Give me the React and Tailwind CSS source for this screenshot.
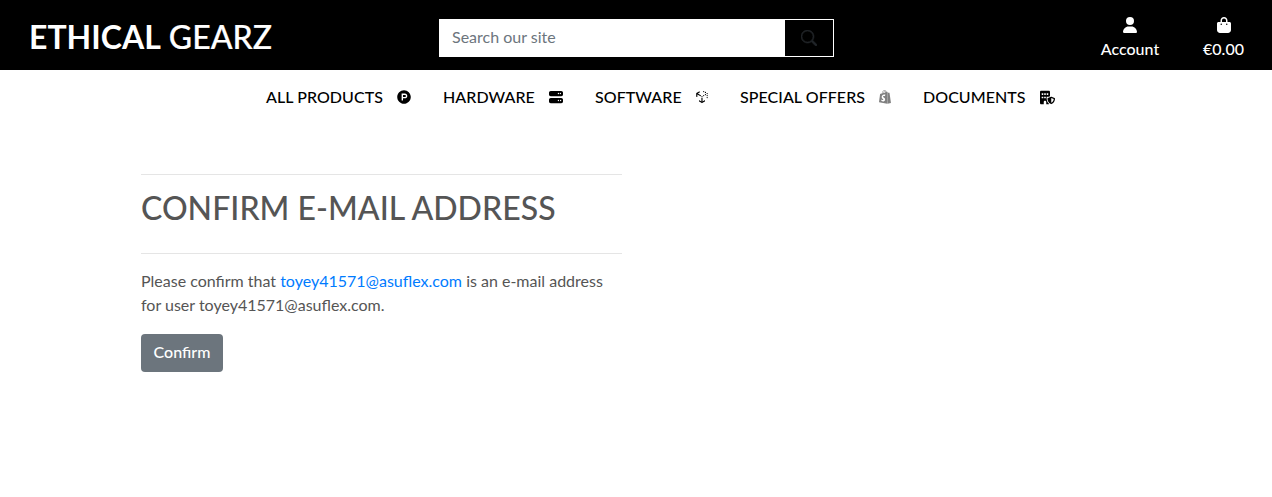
import {
  FaBagShopping,
  FaBuildingShield,
  FaProductHunt,
  FaServer,
  FaShopify,
  FaUncharted,
  FaUser,
} from "react-icons/fa6";
import { BsSearch } from "react-icons/bs";

const links = [
  { label: "ALL PRODUCTS", Icon: FaProductHunt, w: "w-[177px]", gap: "gap-[14px]", size: "size-[14px]", tone: "text-black" },
  { label: "HARDWARE", Icon: FaServer, w: "w-[152px]", gap: "gap-[14px]", size: "size-[14px]", tone: "text-black" },
  { label: "SOFTWARE", Icon: FaUncharted, w: "w-[145px]", gap: "gap-[13px]", size: "size-[14px]", tone: "text-black" },
  { label: "SPECIAL OFFERS", Icon: FaShopify, w: "w-[183px]", gap: "gap-[13px]", size: "size-[14px]", tone: "text-[#808080]" },
  { label: "DOCUMENTS", Icon: FaBuildingShield, w: "w-[140px]", gap: "gap-[14px]", size: "size-[15px]", tone: "text-black" },
];

export default function App() {
  return (
    <div className="min-h-[497px] bg-white font-['Lato',sans-serif] text-base text-[#555555]">
      <header className="flex h-[70px] items-start bg-black text-white">
        <div className="w-[439px] pt-[17px] pl-[29px] text-[32px] leading-[40px] font-medium whitespace-nowrap">
          <span className="font-bold">ETHICAL</span>{" "}
          <span className="[-webkit-text-stroke:0.2px_white]">GEARZ</span>
        </div>
        <form className="mt-[19px] flex h-[38px] w-[395px]">
          <input
            className="w-[346px] bg-white px-[13px] pb-[2px] text-base placeholder:text-[#6c757d] placeholder:opacity-100"
            placeholder="Search our site"
          />
          <button type="button" className="flex flex-1 items-center justify-center border border-l-0 border-white bg-black text-[#212529]">
            <BsSearch className="size-4" strokeWidth={0.6} />
          </button>
        </form>
        <div className="ml-auto flex pt-[17px] pr-[27px] font-medium">
          <div className="flex w-[60px] flex-col items-center">
            <FaUser className="size-4" />
            <span className="mt-1 leading-6">Account</span>
          </div>
          <div className="ml-[42px] flex w-[43px] flex-col items-center">
            <FaBagShopping className="size-4" />
            <span className="mt-1 leading-6">€0.00</span>
          </div>
        </div>
      </header>
      <nav className="flex h-[54px] items-center pl-[266px] font-medium text-black">
        {links.map(({ label, Icon, w, gap, size, tone }) => (
          <a key={label} className={`flex items-center tracking-[0.06px] whitespace-nowrap ${gap} ${w}`}>
            {label}
            <Icon className={`${size} ${tone}`} />
          </a>
        ))}
      </nav>
      <main className="mt-[50px] ml-[141px] w-[481px]">
        <hr className="border-[#e5e5e5]" />
        <h1 className="mt-[13px] text-[32px] leading-[40px] font-medium tracking-[0.03px] whitespace-nowrap">
          CONFIRM E-MAIL ADDRESS
        </h1>
        <hr className="mt-[25px] border-[#e5e5e5]" />
        <p className="mt-[15px] leading-6">
          Please confirm that <a className="text-[#007bff]">toyey41571@asuflex.com</a> is an e-mail address for user
          toyey41571@asuflex.com.
        </p>
        <button className="mt-[17px] h-[38px] w-[82px] rounded-[4px] bg-[#6c757d] pb-[2px] font-medium text-white">
          Confirm
        </button>
      </main>
    </div>
  );
}
